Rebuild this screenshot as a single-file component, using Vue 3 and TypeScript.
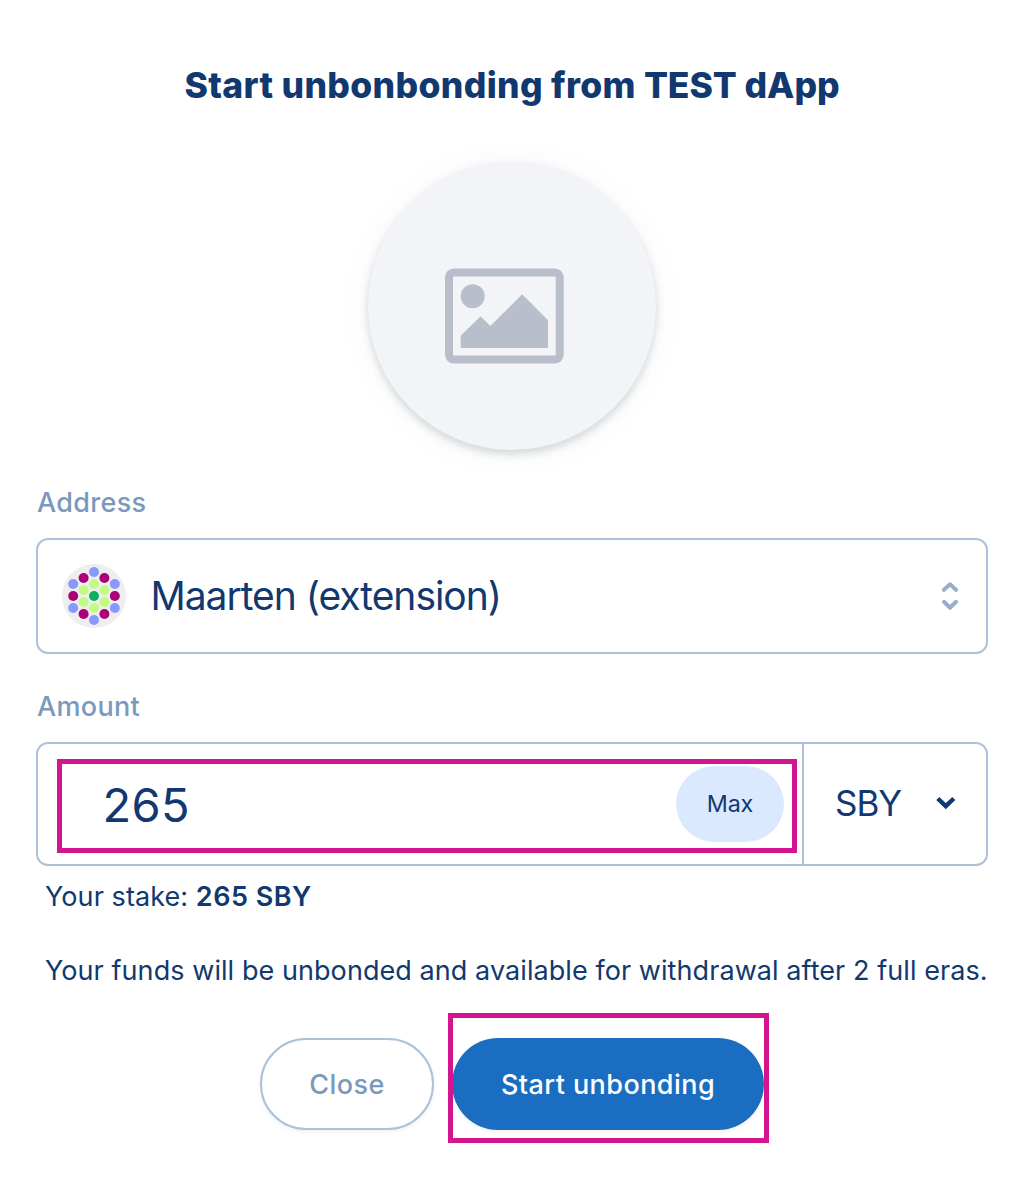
<script setup lang="ts">
interface Dot {
  x: number
  y: number
  color: string
}

const blue = '#8799fc'
const plum = '#aa0078'
const lime = '#c1fb83'
const green = '#0fae60'

const dots: Dot[] = [
  { x: 32, y: 8, color: blue },
  { x: 32, y: 20, color: lime },
  { x: 21.6, y: 14, color: plum },
  { x: 11.2, y: 20, color: blue },
  { x: 21.6, y: 26, color: lime },
  { x: 11.2, y: 32, color: plum },
  { x: 11.2, y: 44, color: blue },
  { x: 21.6, y: 38, color: lime },
  { x: 21.6, y: 50, color: plum },
  { x: 32, y: 56, color: blue },
  { x: 32, y: 44, color: lime },
  { x: 42.4, y: 50, color: plum },
  { x: 52.8, y: 44, color: blue },
  { x: 42.4, y: 38, color: lime },
  { x: 52.8, y: 32, color: plum },
  { x: 52.8, y: 20, color: blue },
  { x: 42.4, y: 26, color: lime },
  { x: 42.4, y: 14, color: plum },
  { x: 32, y: 32, color: green },
]
</script>

<template>
  <main class="modal">
    <h1 class="title">Start unbonbonding from <span class="dapp">TEST dApp</span></h1>

    <div class="logo">
      <svg width="120" height="96" viewBox="0 0 120 96">
        <rect x="4" y="4.400" width="110.700" height="87.200" rx="5" fill="none" stroke="#b8beca" stroke-width="8" />
        <circle cx="27.700" cy="28.300" r="12" fill="#b8beca" />
        <path d="M15.700 80V67.700L35.500 48.200 45.300 58 77.200 26.300 103 52.300V80Z" fill="#b8beca" />
      </svg>
    </div>

    <label class="label address-label">Address</label>
    <div class="field address">
      <svg class="identicon" width="64" height="64" viewBox="0 0 64 64">
        <circle cx="32" cy="32" r="32" fill="#eee" />
        <circle v-for="(d, i) in dots" :key="i" :cx="d.x" :cy="d.y" r="5" :fill="d.color" />
      </svg>
      <span class="account">Maarten (extension)</span>
      <svg class="selector" width="18" height="30" viewBox="0 0 18 30">
        <path d="M2 8.800 8 3.300l6 5.500M2 20.800 8 26.700l6-5.900" fill="none" stroke="#98aecb" stroke-width="4" stroke-linecap="round" stroke-linejoin="round" />
      </svg>
    </div>

    <label class="label amount-label">Amount</label>
    <div class="field amount">
      <div class="entry">
        <span class="value">265</span>
        <button class="max"><span>Max</span></button>
        <i class="highlight highlight-entry"></i>
      </div>
      <div class="unit">
        <span class="symbol">SBY</span>
        <svg width="20" height="14" viewBox="0 0 20 14">
          <path d="M1.800 2.500 9.800 10.200 17.800 2.500" fill="none" stroke="#11386f" stroke-width="4.400" />
        </svg>
      </div>
    </div>

    <p class="note stake">Your stake: <b>265 SBY</b></p>
    <p class="note eras">Your funds will be unbonded and available for withdrawal after 2 full eras.</p>

    <div class="actions">
      <button class="btn close"><span>Close</span></button>
      <div class="confirm">
        <button class="btn start"><span>Start unbonding</span></button>
        <i class="highlight highlight-start"></i>
      </div>
    </div>
  </main>
</template>

<style>
body {
  background: #fff;
}
</style>

<style scoped>
.modal {
  box-sizing: border-box;
  width: 1036px;
  height: 1196px;
  padding: 62px 48px 0 36px;
  display: flex;
  flex-direction: column;
  font-family: Inter, 'Liberation Sans', sans-serif;
  color: #11386f;
  background: #fff;
  overflow: hidden;
}

.title {
  margin: 0;
  font-size: 35.5px;
  line-height: 48px;
  font-weight: 800;
  letter-spacing: 0.34px;
  text-align: center;
  white-space: nowrap;
}

.dapp {
  letter-spacing: -0.05px;
}

.logo {
  box-sizing: border-box;
  width: 288px;
  height: 288px;
  margin: 52px auto 0;
  padding: 106px 0 0 77px;
  border-radius: 50%;
  background: #f2f4f8;
  box-shadow: 0 2px 36px rgba(0, 40, 30, 0.04), 0 4px 9px rgba(0, 40, 50, 0.17);
}

.logo svg {
  display: block;
}

.label {
  font-size: 27px;
  line-height: 40px;
  font-weight: 500;
  letter-spacing: 0.32px;
  color: #7a99bd;
  padding-left: 1px;
}

.address-label,
.amount-label {
  margin-top: 33px;
}

.field {
  box-sizing: border-box;
  display: flex;
  align-items: center;
  border: 2px solid #adc1d8;
  border-radius: 12px;
}

.address {
  height: 116px;
  margin-top: 15px;
  padding: 0 26px 0 24px;
}

.account {
  flex: 1;
  margin: 0 0 0 24.5px;
  font-size: 39px;
  line-height: 48px;
  letter-spacing: -1.03px;
  white-space: nowrap;
}

.amount {
  height: 124px;
  margin-top: 15px;
  align-items: stretch;
}

.entry {
  position: relative;
  box-sizing: border-box;
  width: 764px;
  padding: 0 18px 0 64.5px;
  display: flex;
  align-items: center;
  justify-content: space-between;
}

.value {
  margin-top: 2px;
  font-size: 47px;
  line-height: 60px;
  letter-spacing: 0.4px;
}

.max {
  width: 108px;
  height: 76px;
  padding: 0;
  border: 0;
  border-radius: 38px;
  background: #dbe9ff;
  color: inherit;
  font: 400 23.3px/32px Inter, sans-serif;
  letter-spacing: -0.15px;
}

.unit {
  flex: 1;
  display: flex;
  align-items: center;
  justify-content: space-between;
  padding: 0 30px 2px 31px;
  border-left: 2px solid #adc1d8;
}

.symbol {
  font-size: 35px;
  line-height: 48px;
  letter-spacing: -1px;
}

.note {
  margin: 11px 0 0 9px;
  font-size: 27px;
  line-height: 40px;
  letter-spacing: 0.07px;
  white-space: nowrap;
}

.stake {
  letter-spacing: 0.08px;
}

.note b {
  font-weight: 600;
  letter-spacing: 0.48px;
}

.eras {
  margin-top: 34px;
}

.actions {
  display: flex;
  gap: 18px;
  margin: 47px 0 0 224px;
}

.btn {
  display: block;
  box-sizing: border-box;
  height: 92px;
  padding: 2px 0 0;
  border: 0;
  border-radius: 46px;
  font: 500 27px/40px Inter, sans-serif;
  letter-spacing: 0.44px;
  box-shadow: 0 2px 4px rgba(0, 0, 0, 0.06);
}

.close {
  width: 174px;
  border: 2px solid #adc1d8;
  background: #fff;
  color: #7a99bd;
}

.confirm {
  position: relative;
}

.start {
  width: 312px;
  background: #1b6dc1;
  color: #fff;
}

.highlight {
  position: absolute;
  border: 5px solid #d3168f;
  pointer-events: none;
}

.highlight-entry {
  inset: 15px 5px 11px 19px;
}

.highlight-start {
  inset: -25px -5px -13px -4px;
}
</style>
